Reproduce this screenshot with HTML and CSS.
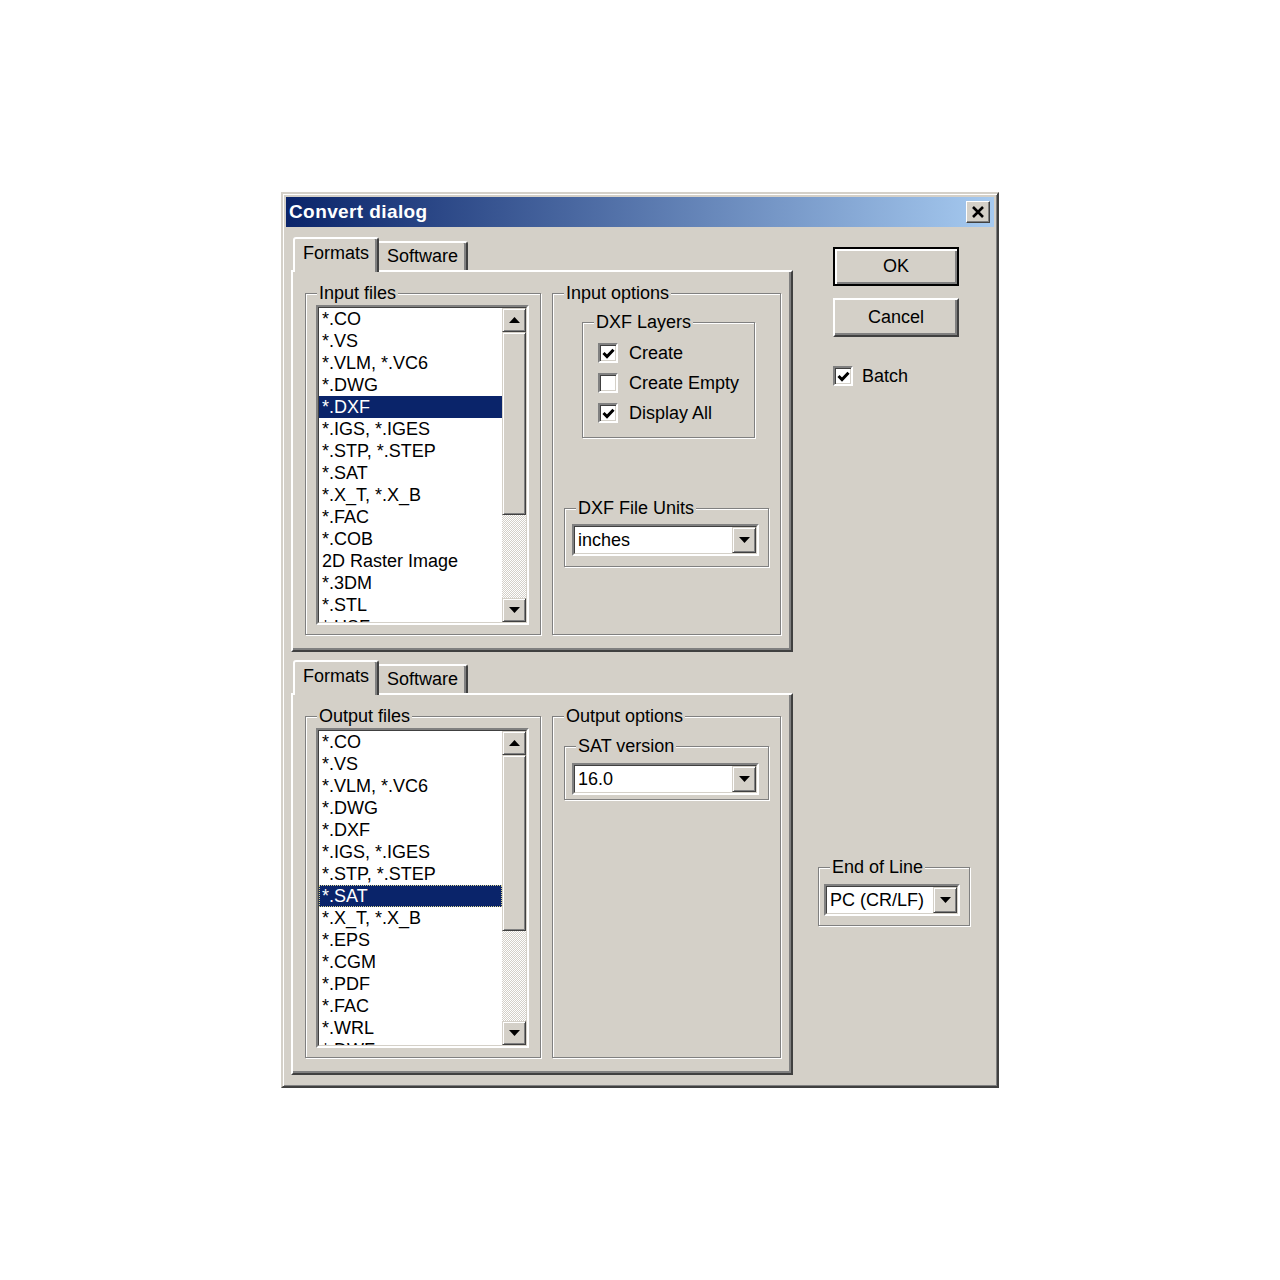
FILE: index.html
```html
<!DOCTYPE html>
<html>
<head>
<meta charset="utf-8">
<title>Convert dialog</title>
<link rel="stylesheet" href="styles.css">
</head>
<body>
<div class="dialog">
  <div class="titlebar">
    <span class="title">Convert dialog</span>
    <div class="close"><svg width="14" height="12" viewBox="0 0 14 12"><path d="M2 1 L12 11 M12 1 L2 11" stroke="#000" stroke-width="2.6" fill="none"/></svg></div>
  </div>
  <div class="body">
    <div class="left">
      <div class="tabctl">
        <div class="tabs"><div class="tab sel">Formats</div><div class="tab">Software</div></div>
        <div class="panel">
          <fieldset class="group files">
            <legend>Input files</legend>
            <div class="listbox">
              <div class="lb-inner">
                <ul class="items">
                  <li>*.CO</li><li>*.VS</li><li>*.VLM, *.VC6</li><li>*.DWG</li>
                  <li class="sel">*.DXF</li><li>*.IGS, *.IGES</li><li>*.STP, *.STEP</li>
                  <li>*.SAT</li><li>*.X_T, *.X_B</li><li>*.FAC</li><li>*.COB</li>
                  <li>2D Raster Image</li><li>*.3DM</li><li>*.STL</li><li>*.HSF</li>
                </ul>
                <div class="vscroll">
                  <div class="sbtn"><svg width="11" height="6" viewBox="0 0 11 6"><path d="M0 6 L5.5 0 L11 6Z" fill="#000"/></svg></div>
                  <div class="thumb t1"></div>
                  <div class="track"></div>
                  <div class="sbtn"><svg width="11" height="6" viewBox="0 0 11 6"><path d="M0 0 L5.5 6 L11 0Z" fill="#000"/></svg></div>
                </div>
              </div>
            </div>
          </fieldset>
          <fieldset class="group options">
            <legend>Input options</legend>
            <fieldset class="group layers">
              <legend>DXF Layers</legend>
              <div class="checks">
                <div class="chkrow"><span class="chk"><svg width="13" height="11" viewBox="0 0 13 11"><path d="M1.5 5 L5 8.5 L11.5 1.8" stroke="#000" stroke-width="3" fill="none"/></svg></span><span>Create</span></div>
                <div class="chkrow"><span class="chk"></span><span>Create Empty</span></div>
                <div class="chkrow"><span class="chk"><svg width="13" height="11" viewBox="0 0 13 11"><path d="M1.5 5 L5 8.5 L11.5 1.8" stroke="#000" stroke-width="3" fill="none"/></svg></span><span>Display All</span></div>
              </div>
            </fieldset>
            <fieldset class="group units">
              <legend>DXF File Units</legend>
              <div class="combo"><div class="combo-inner"><span class="combo-text">inches</span><span class="combo-btn"><svg width="11" height="6" viewBox="0 0 11 6"><path d="M0 0 L5.5 6 L11 0Z" fill="#000"/></svg></span></div></div>
            </fieldset>
          </fieldset>
        </div>
      </div>
      <div class="tabctl">
        <div class="tabs"><div class="tab sel">Formats</div><div class="tab">Software</div></div>
        <div class="panel">
          <fieldset class="group files">
            <legend>Output files</legend>
            <div class="listbox">
              <div class="lb-inner">
                <ul class="items">
                  <li>*.CO</li><li>*.VS</li><li>*.VLM, *.VC6</li><li>*.DWG</li>
                  <li>*.DXF</li><li>*.IGS, *.IGES</li><li>*.STP, *.STEP</li>
                  <li class="sel focus">*.SAT</li><li>*.X_T, *.X_B</li><li>*.EPS</li><li>*.CGM</li>
                  <li>*.PDF</li><li>*.FAC</li><li>*.WRL</li><li>*.DWF</li>
                </ul>
                <div class="vscroll">
                  <div class="sbtn"><svg width="11" height="6" viewBox="0 0 11 6"><path d="M0 6 L5.5 0 L11 6Z" fill="#000"/></svg></div>
                  <div class="thumb t2"></div>
                  <div class="track"></div>
                  <div class="sbtn"><svg width="11" height="6" viewBox="0 0 11 6"><path d="M0 0 L5.5 6 L11 0Z" fill="#000"/></svg></div>
                </div>
              </div>
            </div>
          </fieldset>
          <fieldset class="group options">
            <legend>Output options</legend>
            <fieldset class="group sat">
              <legend>SAT version</legend>
              <div class="combo"><div class="combo-inner"><span class="combo-text">16.0</span><span class="combo-btn"><svg width="11" height="6" viewBox="0 0 11 6"><path d="M0 0 L5.5 6 L11 0Z" fill="#000"/></svg></span></div></div>
            </fieldset>
          </fieldset>
        </div>
      </div>
    </div>
    <div class="right">
      <div class="btn default">OK</div>
      <div class="btn cancel">Cancel</div>
      <div class="chkrow batch"><span class="chk"><svg width="13" height="11" viewBox="0 0 13 11"><path d="M1.5 5 L5 8.5 L11.5 1.8" stroke="#000" stroke-width="3" fill="none"/></svg></span><span>Batch</span></div>
      <fieldset class="group eol">
        <legend>End of Line</legend>
        <div class="combo"><div class="combo-inner"><span class="combo-text">PC (CR/LF)</span><span class="combo-btn"><svg width="11" height="6" viewBox="0 0 11 6"><path d="M0 0 L5.5 6 L11 0Z" fill="#000"/></svg></span></div></div>
      </fieldset>
    </div>
  </div>
</div>
</body>
</html>
```

FILE: styles.css
```css
* { box-sizing: border-box; }
html, body { margin: 0; padding: 0; background: #fff; }
body {
  font-family: "Liberation Sans", Arial, sans-serif;
  font-size: 18px;
  color: #000;
}

.dialog {
  margin: 192px 0 0 281px;
  width: 718px;
  height: 896px;
  background: #d4d0c8;
  border: 2px solid;
  border-color: #d4d0c8 #404040 #404040 #d4d0c8;
  box-shadow: inset 1px 1px #fff, inset -1px -1px #808080;
  padding: 3px;
  display: flex;
  flex-direction: column;
}

.titlebar {
  height: 30px;
  flex: none;
  display: flex;
  align-items: center;
  justify-content: space-between;
  padding: 0 4px 0 3px;
  background: linear-gradient(to right, #0a246a, #a6caf0);
}
.title {
  color: #fff;
  font-weight: bold;
  font-size: 19px;
  letter-spacing: 0.4px;
}
.close {
  width: 24px;
  height: 22px;
  background: #d4d0c8;
  border: 1px solid;
  border-color: #fff #404040 #404040 #fff;
  box-shadow: inset -1px -1px #808080;
  display: flex;
  align-items: center;
  justify-content: center;
}

.body {
  display: flex;
  padding: 10px 0 0 5px;
}
.left {
  width: 502px;
  display: flex;
  flex-direction: column;
  gap: 8px;
}
.right {
  width: 152px;
  margin-left: 25px;
  display: flex;
  flex-direction: column;
}

/* tabs */
.tabs {
  display: flex;
  align-items: flex-end;
  height: 35px;
  padding-left: 2px;
  margin-bottom: -2px;
  position: relative;
  z-index: 1;
}
.tab {
  background: #d4d0c8;
  border: 2px solid;
  border-bottom: none;
  border-color: #fff #404040 transparent #fff;
  box-shadow: inset -2px 0 #808080;
  border-radius: 3px 3px 0 0;
  display: flex;
  align-items: center;
  justify-content: center;
}
.tab.sel {
  width: 86px;
  height: 35px;
  padding-bottom: 4px;
}
.tab:not(.sel) {
  width: 89px;
  height: 29px;
  margin-bottom: 2px;
  border-left: none;
  border-radius: 0 3px 0 0;
}

.panel {
  height: 382px;
  border: 2px solid;
  border-color: #fff #404040 #404040 #fff;
  box-shadow: inset -2px -2px #808080;
  padding: 11px 10px 15px 12px;
  display: flex;
  align-items: flex-start;
  gap: 11px;
}

/* group boxes */
fieldset.group {
  margin: 0;
  padding: 0;
  min-width: 0;
  border: 1px solid #808080;
  box-shadow: inset 1px 1px #fff, 1px 1px #fff;
}
fieldset.group > legend {
  margin-left: 11px;
  padding: 0 2px;
  height: 20px;
  line-height: 20px;
  background: #d4d0c8;
}
.files { width: 236px; height: 352px; }
.options { width: 229px; height: 352px; }
.layers {
  width: 173px;
  height: 126px;
  margin: 9px 0 0 29px !important;
}
.units {
  width: 205px;
  height: 69px;
  margin: 60px 0 0 11px !important;
}
.sat {
  width: 205px;
  height: 64px;
  margin: 10px 0 0 11px !important;
}
.eol {
  width: 152px;
  height: 69px;
  margin-top: 466px !important;
}

/* list box */
.listbox {
  width: 213px;
  height: 320px;
  margin: 2px 0 0 10px;
  border: 2px solid;
  border-color: #808080 #fff #fff #808080;
}
.lb-inner {
  height: 100%;
  border: 1px solid;
  border-color: #404040 #d4d0c8 #d4d0c8 #404040;
  background: #fff;
  display: flex;
}
.items {
  list-style: none;
  margin: 0;
  padding: 0;
  flex: 1;
  overflow: hidden;
}
.items li {
  height: 22px;
  line-height: 22px;
  padding-left: 3px;
  white-space: nowrap;
}
.items li.sel {
  background: #0a246a;
  color: #fff;
}
.items li.focus {
  outline: 1px dotted #d8d490;
  outline-offset: -1px;
}
.vscroll {
  width: 24px;
  display: flex;
  flex-direction: column;
}
.sbtn, .thumb, .combo-btn {
  background: #d4d0c8;
  border: 1px solid;
  border-color: #d4d0c8 #404040 #404040 #d4d0c8;
  box-shadow: inset 1px 1px #fff, inset -1px -1px #808080;
}
.sbtn {
  height: 24px;
  flex: none;
  display: flex;
  align-items: center;
  justify-content: center;
}
.thumb { flex: none; }
.t1 { height: 183px; }
.t2 { height: 176px; }
.track {
  flex: 1;
  background: repeating-conic-gradient(#fff 0 25%, #d4d0c8 0 50%) 0 0 / 2px 2px;
}

/* checkboxes */
.checks {
  margin-top: 6px;
  padding-left: 15px;
}
.chkrow {
  height: 30px;
  display: flex;
  align-items: center;
  gap: 11px;
}
.chk {
  width: 20px;
  height: 20px;
  flex: none;
  background: #fff;
  border: 2px solid;
  border-color: #808080 #fff #fff #808080;
  box-shadow: inset 1px 1px #404040, inset -1px -1px #d4d0c8;
  display: flex;
  align-items: center;
  justify-content: center;
}
.batch {
  margin: 24px 0 0 15px;
  gap: 9px;
}

/* combo */
.combo {
  height: 32px;
  margin: 6px 0 0 7px;
  border: 2px solid;
  border-color: #808080 #fff #fff #808080;
}
.units .combo { width: 187px; }
.sat .combo { width: 187px; margin-top: 7px; }
.eol .combo { width: 136px; margin: 7px 0 0 5px; }
.combo-inner {
  height: 100%;
  border: 1px solid;
  border-color: #404040 #d4d0c8 #d4d0c8 #404040;
  background: #fff;
  display: flex;
  align-items: center;
}
.combo-text {
  flex: 1;
  padding-left: 3px;
  white-space: nowrap;
}
.combo-btn {
  width: 24px;
  height: 100%;
  flex: none;
  display: flex;
  align-items: center;
  justify-content: center;
}

/* buttons */
.btn {
  margin-left: 15px;
  width: 126px;
  height: 39px;
  background: #d4d0c8;
  display: flex;
  align-items: center;
  justify-content: center;
  border: 2px solid;
  border-color: #fff #404040 #404040 #fff;
  box-shadow: inset -2px -2px #808080;
}
.btn.default {
  margin-top: 10px;
  border-color: #000;
  box-shadow: inset 2px 2px #fff, inset -2px -2px #808080;
}
.btn.cancel {
  margin-top: 12px;
}
```
